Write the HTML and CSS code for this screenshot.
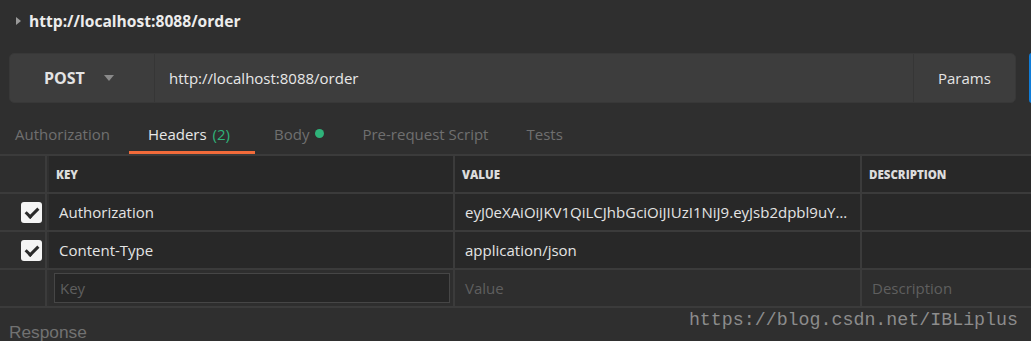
FILE: index.html
```html
<!DOCTYPE html>
<html lang="en">
  <head>
    <meta charset="UTF-8" />
    <title>Postman request</title>
    <link rel="stylesheet" href="styles.css">
  </head>
  <body>
    <div class="title">
      <span class="caret"></span>
      <span>http://localhost:8088/order</span>
    </div>

    <div class="request-row">
      <div class="url-bar">
        <div class="method">
          POST
          <svg class="method-arrow" width="10" height="6" viewBox="0 0 10 6">
            <path d="M0 0 L10 0 L5 6 Z" fill="#8a8a8a" />
          </svg>
        </div>
        <div class="url">http://localhost:8088/order</div>
        <div class="params">Params</div>
      </div>
      <div class="send"></div>
    </div>

    <div class="tabs">
      <div class="tab">Authorization</div>
      <div class="tab active">Headers <span class="count">(2)</span></div>
      <div class="tab">Body <span class="dot"></span></div>
      <div class="tab">Pre-request Script</div>
      <div class="tab">Tests</div>
    </div>

    <div class="table">
      <div class="row head">
        <div class="cell check"></div>
        <div class="cell">KEY</div>
        <div class="cell">VALUE</div>
        <div class="cell">DESCRIPTION</div>
      </div>
      <div class="row">
        <div class="cell check"><span class="box"></span></div>
        <div class="cell">Authorization</div>
        <div class="cell">eyJ0eXAiOiJKV1QiLCJhbGciOiJIUzI1NiJ9.eyJsb2dpbl9uY…</div>
        <div class="cell"></div>
      </div>
      <div class="row">
        <div class="cell check"><span class="box"></span></div>
        <div class="cell">Content-Type</div>
        <div class="cell">application/json</div>
        <div class="cell"></div>
      </div>
      <div class="row empty">
        <div class="cell check"></div>
        <div class="cell"><div class="key-input">Key</div></div>
        <div class="cell placeholder">Value</div>
        <div class="cell placeholder">Description</div>
      </div>
    </div>

    <div class="response">
      <span>Response</span>
      <span class="watermark">https://blog.csdn.net/IBLiplus</span>
    </div>
  </body>
</html>
```

FILE: styles.css
```css
* {
  box-sizing: border-box;
}

html,
body {
  margin: 0;
  padding: 0;
  background: #2f2f2f;
  height: 341px;
  overflow: hidden;
}

body {
  font-family: "Open Sans", sans-serif;
  color: #e4e4e4;
}

.title {
  display: flex;
  align-items: center;
  gap: 8px;
  height: 42px;
  padding-left: 16px;
  font-size: 15.6px;
  font-weight: 700;
  color: #ececec;
}

.caret {
  width: 0;
  height: 0;
  border-top: 4px solid transparent;
  border-bottom: 4px solid transparent;
  border-left: 5px solid #9a9a9a;
}

.request-row {
  display: flex;
  gap: 13px;
  margin-top: 11px;
  padding-left: 9px;
  height: 50px;
  overflow: hidden;
}

.url-bar {
  display: flex;
  flex-shrink: 0;
  width: 1007px;
  background: #3d3d3d;
  border: 1px solid #383838;
  border-radius: 5px;
}

.method {
  display: flex;
  align-items: center;
  gap: 19px;
  width: 145px;
  padding-left: 34px;
  font-size: 16px;
  font-weight: 700;
  border-right: 1px solid #363636;
}

.url {
  flex: 1;
  display: flex;
  align-items: center;
  padding-left: 14px;
  font-size: 15px;
  color: #e8e8e8;
}

.params {
  display: flex;
  align-items: center;
  width: 102px;
  padding-left: 24px;
  font-size: 15px;
  border-left: 1px solid #363636;
}

.send {
  flex-shrink: 0;
  width: 40px;
  background: #0f7cd8;
  border-radius: 3px 0 0 3px;
}

.tabs {
  display: flex;
  margin-top: 10px;
  height: 41px;
}

.tab {
  display: flex;
  align-items: center;
  gap: 6px;
  font-size: 15px;
  color: #6f6f6f;
  padding: 0 19px;
}

.tab:first-child {
  margin-left: -4px;
}

.tab.active {
  color: #e8e8e8;
  border-bottom: 3px solid #f26b3a;
  padding: 3px 25px 0 19px;
}

.tab .count {
  color: #2fb37a;
}

.dot {
  width: 9px;
  height: 9px;
  border-radius: 50%;
  background: #2fb37a;
}

.table {
  display: flex;
  flex-direction: column;
  gap: 2px;
  background: #3b3b3b;
  border-top: 2px solid #3b3b3b;
  border-bottom: 2px solid #3b3b3b;
}

.row {
  display: grid;
  grid-template-columns: 45px 406px 405px 1fr;
  column-gap: 2px;
  height: 36px;
}

.cell {
  display: flex;
  align-items: center;
  background: #282828;
  padding-left: 10px;
  font-size: 15px;
  white-space: nowrap;
  overflow: hidden;
}

.row .cell:nth-child(2) {
  border-left: 2px solid #303030;
}

.row.empty .cell {
  background: #2e2e2e;
}

.head .cell {
  font-size: 11.5px;
  font-weight: 800;
  color: #dcdcdc;
  padding-left: 7px;
}

.cell.check {
  justify-content: flex-end;
  padding: 0 3px 0 0;
  background: #2e2e2e;
}

.box {
  position: relative;
  width: 21px;
  height: 21px;
  border-radius: 3px;
  background: #f4f4f4;
}

.box::after {
  content: "";
  position: absolute;
  left: 7px;
  top: 3px;
  width: 5px;
  height: 10px;
  border: solid #2a2a2a;
  border-width: 0 3px 3px 0;
  transform: rotate(45deg);
}

.key-input {
  width: 396px;
  height: 30px;
  margin-left: -5px;
  padding-left: 5px;
  display: flex;
  align-items: center;
  background: #262626;
  border: 1px solid #464646;
  color: #5f5f5f;
}

.placeholder {
  color: #5f5f5f;
}

.response {
  position: relative;
  padding: 14px 0 0 9px;
  font-family: "Liberation Sans", Arial, sans-serif;
  font-size: 17.3px;
  color: #727272;
}

.watermark {
  position: absolute;
  right: 13px;
  top: 2px;
  font-family: "Liberation Mono", monospace;
  font-size: 18.3px;
  color: #8c8c8c;
}
```
